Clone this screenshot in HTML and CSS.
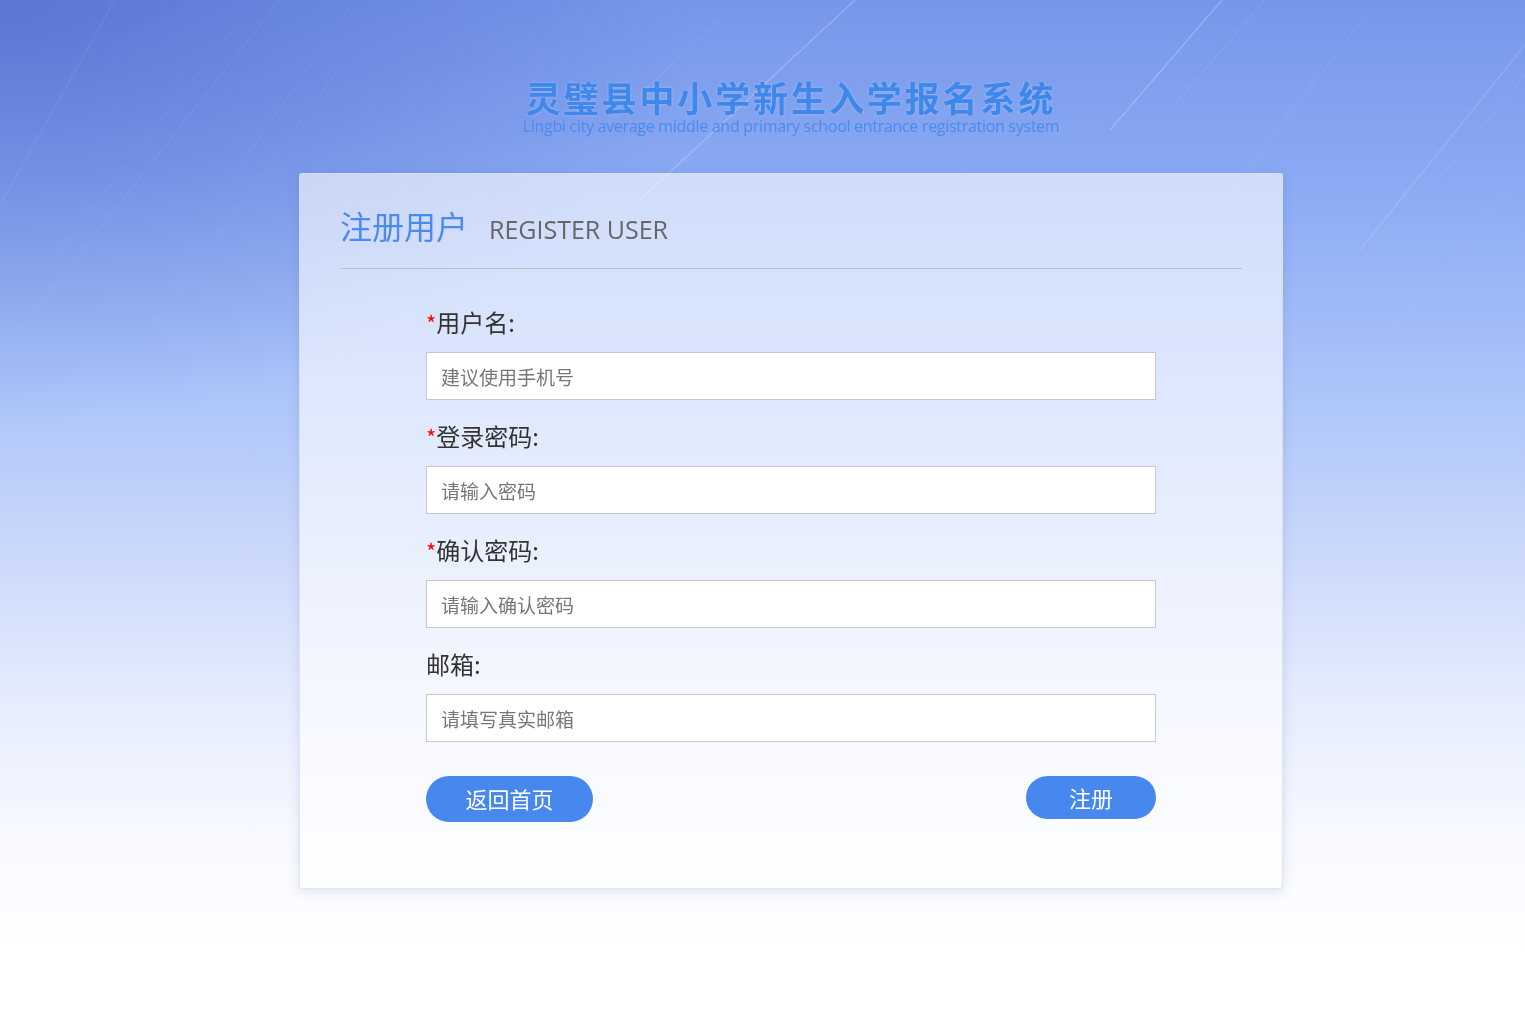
FILE: index.html
```html
<!DOCTYPE html>
<html lang="zh-CN">
<head>
    <meta charset="UTF-8">
    <meta name="viewport" content="width=device-width, initial-scale=1.0">
    <title>灵璧县中小学新生入学报名系统 - 注册用户</title>
    <link rel="stylesheet" href="styles.css">
</head>
<body>
    <!-- light streaks in the sky -->
    <svg class="streaks" viewBox="0 0 1525 1018" preserveAspectRatio="none" aria-hidden="true">
        <g stroke="#ffffff" stroke-linecap="round" fill="none">
            <line x1="0" y1="205" x2="115" y2="0" stroke-width="1" stroke-opacity="0.1"/>
            <line x1="20" y1="330" x2="280" y2="0" stroke-width="1" stroke-opacity="0.09"/>
            <line x1="60" y1="250" x2="240" y2="20" stroke-width="1" stroke-opacity="0.07"/>
            <line x1="150" y1="330" x2="345" y2="60" stroke-width="1" stroke-opacity="0.08"/>
            <line x1="230" y1="180" x2="355" y2="0" stroke-width="1" stroke-opacity="0.08"/>
            <line x1="640" y1="200" x2="855" y2="0" stroke-width="1.5" stroke-opacity="0.22"/>
            <line x1="580" y1="150" x2="720" y2="20" stroke-width="1" stroke-opacity="0.1"/>
            <line x1="880" y1="260" x2="1040" y2="90" stroke-width="1" stroke-opacity="0.08"/>
            <line x1="1110" y1="130" x2="1222" y2="0" stroke-width="1.5" stroke-opacity="0.22"/>
            <line x1="1170" y1="110" x2="1265" y2="0" stroke-width="1" stroke-opacity="0.12"/>
            <line x1="1200" y1="230" x2="1320" y2="70" stroke-width="1" stroke-opacity="0.1"/>
            <line x1="1250" y1="170" x2="1365" y2="15" stroke-width="1" stroke-opacity="0.1"/>
            <line x1="1360" y1="250" x2="1525" y2="45" stroke-width="1.2" stroke-opacity="0.15"/>
            <line x1="1430" y1="190" x2="1525" y2="75" stroke-width="1" stroke-opacity="0.1"/>
            <line x1="1390" y1="330" x2="1525" y2="170" stroke-width="1" stroke-opacity="0.08"/>
        </g>
    </svg>

    <div class="page">
        <!-- system title -->
        <div class="brand">
            <div class="brand-cn">灵璧县中小学新生入学报名系统</div>
            <div class="brand-en">Lingbi city average middle and primary school entrance registration system</div>
        </div>

        <!-- register card -->
        <div class="card">
            <div class="card-head">
                <span class="head-cn">注册用户</span>
                <span class="head-en">REGISTER USER</span>
            </div>

            <form class="reg-form" id="regForm">
                <div class="field">
                    <label for="username"><span class="req">*</span>用户名:</label>
                    <input type="text" id="username" placeholder="建议使用手机号">
                </div>
                <div class="field">
                    <label for="password"><span class="req">*</span>登录密码:</label>
                    <input type="password" id="password" placeholder="请输入密码">
                </div>
                <div class="field">
                    <label for="password2"><span class="req">*</span>确认密码:</label>
                    <input type="password" id="password2" placeholder="请输入确认密码">
                </div>
                <div class="field">
                    <label for="email">邮箱:</label>
                    <input type="text" id="email" placeholder="请填写真实邮箱">
                </div>

                <div class="actions">
                    <button type="button" class="btn btn-back">返回首页</button>
                    <button type="submit" class="btn btn-submit">注册</button>
                </div>
            </form>
        </div>
    </div>
</body>
</html>
```

FILE: styles.css
```css
body {
    margin: 0;
    padding: 0 0 0 57px;
    min-height: 1018px;
    font-family: "Noto Sans CJK SC", "Noto Sans", sans-serif;
    color: #333;
    background:
        radial-gradient(ellipse 700px 420px at 0 0, rgba(60, 86, 190, 0.5), rgba(60, 86, 190, 0) 100%),
        linear-gradient(180deg, #7697e9 0%, #8aaaf3 18%, #a6c0f9 35%, #c6d5fa 52%, #e4ebfd 68%, #f7f9ff 82%, #ffffff 94%);
    overflow: hidden;
}

.streaks {
    position: fixed;
    left: 0;
    top: 0;
    width: 1525px;
    height: 1018px;
    pointer-events: none;
}

.page {
    position: relative;
    width: 984px;
    margin: 0 auto;
}

/* title */
.brand {
    padding-top: 79px;
    text-align: center;
}

.brand-cn {
    font-size: 35px;
    line-height: 36px;
    font-weight: 700;
    letter-spacing: 2.9px;
    color: #3f88eb;
    text-shadow: 0 0 3px rgba(255, 255, 255, 0.3);
}

.brand-en {
    margin-top: 2px;
    font-family: "Open Sans", sans-serif;
    font-size: 16px;
    line-height: 19px;
    letter-spacing: -0.3px;
    color: #4a8bee;
}

/* card */
.card {
    margin-top: 37px;
    padding: 29px 40px 66px;
    background-color: rgba(255, 255, 255, 0.6);
    border: 1px solid rgba(214, 222, 240, 0.8);
    border-radius: 3px;
    box-shadow: 0 2px 12px rgba(70, 90, 150, 0.16);
}

.card-head {
    display: flex;
    align-items: baseline;
    gap: 21px;
    padding-bottom: 17px;
    border-bottom: 1px solid #bcc0cc;
    line-height: 44px;
}

.head-cn {
    font-size: 32px;
    color: #4a8bf0;
}

.head-en {
    font-family: "Open Sans", sans-serif;
    font-size: 25px;
    color: #666;
}

/* form */
.reg-form {
    width: 730px;
    margin: 36px auto 0;
}

.field {
    margin-bottom: 19px;
}

.field label {
    display: block;
    font-size: 24px;
    line-height: 34px;
    margin-bottom: 13px;
    color: #333;
}

.req {
    color: #f00;
    font-size: 22px;
}

.field input {
    display: block;
    box-sizing: border-box;
    width: 100%;
    height: 48px;
    padding: 0 14px;
    border: 1px solid #c8c8c8;
    background: #fff;
    font-family: "Noto Sans CJK SC", sans-serif;
    font-size: 19px;
    color: #333;
    outline: none;
}

.field input::placeholder {
    color: #777;
}

.actions {
    display: flex;
    justify-content: space-between;
    align-items: flex-start;
    margin-top: 34px;
}

.btn {
    border: none;
    border-radius: 24px;
    background-color: #4688ee;
    color: #fff;
    font-family: "Noto Sans CJK SC", sans-serif;
    font-size: 22px;
    cursor: pointer;
    padding: 0 0 2px;
}

.btn-back {
    width: 167px;
    height: 46px;
}

.btn-submit {
    width: 130px;
    height: 43px;
}

.btn:hover {
    background-color: #3a7ae0;
}
```
